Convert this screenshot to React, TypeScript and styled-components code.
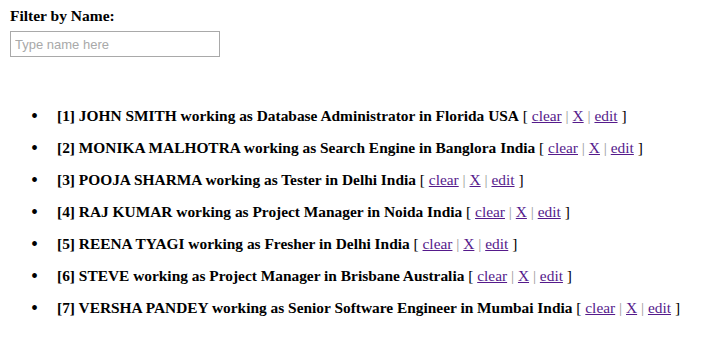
import styled, {createGlobalStyle} from "styled-components";

const GlobalStyle = createGlobalStyle`
	body {
		margin: 0;
		background: #ffffff;
		font-family: 'Liberation Serif', 'Times New Roman', serif;
		color: #000000;
	}
`
const Page = styled.div`
	padding: 7px 10px;
`
const Label = styled.div`
	font-size: 15.5px;
	font-weight: 700;
	line-height: 18px;
`
const NameInput = styled.input`
	display: block;
	box-sizing: border-box;
	margin-top: 6px;
	width: 210px;
	height: 26px;
	padding: 2px 4px;
	border: 1px solid #a9a9a9;
	font-family: 'Liberation Sans', Arial, sans-serif;
	font-size: 13px;
	color: #000000;
	outline: none;

	&::placeholder {
		color: #a9a9a9;
	}
`
const List = styled.ul`
	margin: 50px 0 0;
	padding-left: 47px;
	list-style: none;
`
const Item = styled.li`
	font-size: 15.4px;
	line-height: 18px;
	margin-bottom: 14px;

	&::before {
		content: "•";
		display: inline-block;
		width: 26px;
		margin-left: -26px;
		font-size: 20px;
		line-height: 18px;
		vertical-align: top;
	}
`
const Info = styled.b`
	font-weight: 700;
`
const Bracket = styled.span`
	font-weight: 400;
`
const Sep = styled.span`
	color: #999999;
`
const Action = styled.a`
	color: #551a8b;
	text-decoration: underline;
	cursor: pointer;
`

const people = [
	{id: 1, name: "JOHN SMITH", role: "Database Administrator", place: "Florida USA"},
	{id: 2, name: "MONIKA MALHOTRA", role: "Search Engine", place: "Banglora India"},
	{id: 3, name: "POOJA SHARMA", role: "Tester", place: "Delhi India"},
	{id: 4, name: "RAJ KUMAR", role: "Project Manager", place: "Noida India"},
	{id: 5, name: "REENA TYAGI", role: "Fresher", place: "Delhi India"},
	{id: 6, name: "STEVE", role: "Project Manager", place: "Brisbane Australia"},
	{id: 7, name: "VERSHA PANDEY", role: "Senior Software Engineer", place: "Mumbai India"},
]

export default function App() {
	return (
		<>
			<GlobalStyle/>
			<Page>
				<Label>Filter by Name:</Label>
				<NameInput placeholder="Type name here"/>
				<List>
					{people.map(p => (
						<Item key={p.id}>
							<Info>[{p.id}] {p.name} working as {p.role} in {p.place}</Info>
							{" "}
							<Bracket>
								[ <Action>clear</Action> <Sep>|</Sep> <Action>X</Action> <Sep>|</Sep> <Action>edit</Action> ]
							</Bracket>
						</Item>
					))}
				</List>
			</Page>
		</>
	)
}
